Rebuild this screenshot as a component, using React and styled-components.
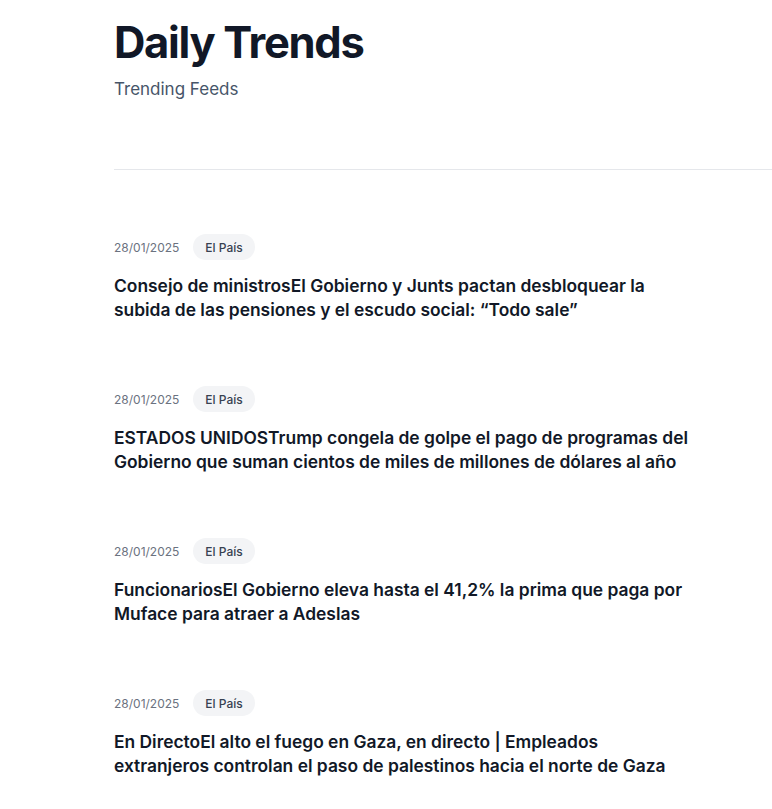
import React from "react";
import styled, { createGlobalStyle } from "styled-components";

const Global = createGlobalStyle`
  html, body { margin: 0; padding: 0; background: #fff; }
  body { font-family: Inter, "Noto Sans", sans-serif; color: #111827; -webkit-font-smoothing: antialiased; }
  * { box-sizing: border-box; }
`;

const Page = styled.main`
  padding: 16px 0 0 114px;
`;

const Header = styled.header`
  display: flex;
  flex-direction: column;
  gap: 9px;
  padding-bottom: 68px;
  border-bottom: 1px solid #e5e7eb;
`;

const Title = styled.h1`
  margin: 0;
  font-size: 43.5px;
  line-height: 52px;
  font-weight: 700;
  letter-spacing: -0.03em;
  color: #111827;
`;

const Subtitle = styled.p`
  margin: 0;
  font-size: 17px;
  line-height: 24px;
  color: #475569;
`;

const List = styled.section`
  display: flex;
  flex-direction: column;
  gap: 64px;
  padding-top: 64px;
`;

const Item = styled.article`
  display: flex;
  flex-direction: column;
  gap: 14px;
  max-width: 580px;
`;

const Meta = styled.div`
  display: flex;
  align-items: center;
  gap: 14px;
`;

const DateText = styled.time`
  font-size: 12px;
  color: #6b7280;
`;

const Badge = styled.span`
  display: inline-flex;
  align-items: center;
  height: 26px;
  padding: 0 12px;
  border-radius: 9999px;
  background: #f3f4f6;
  font-size: 12px;
  font-weight: 500;
  color: #374151;
`;

const Headline = styled.h2`
  margin: 0;
  font-size: 17.4px;
  line-height: 24px;
  font-weight: 600;
  color: #111827;
`;

const items = [
  "Consejo de ministrosEl Gobierno y Junts pactan desbloquear la subida de las pensiones y el escudo social: “Todo sale”",
  "ESTADOS UNIDOSTrump congela de golpe el pago de programas del Gobierno que suman cientos de miles de millones de dólares al año",
  "FuncionariosEl Gobierno eleva hasta el 41,2% la prima que paga por Muface para atraer a Adeslas",
  "En DirectoEl alto el fuego en Gaza, en directo | Empleados extranjeros controlan el paso de palestinos hacia el norte de Gaza",
];

export default function App() {
  return (
    <>
      <Global />
      <Page>
        <Header>
          <Title>Daily Trends</Title>
          <Subtitle>Trending Feeds</Subtitle>
        </Header>
        <List>
          {items.map((t, i) => (
            <Item key={i}>
              <Meta>
                <DateText>28/01/2025</DateText>
                <Badge>El País</Badge>
              </Meta>
              <Headline>{t}</Headline>
            </Item>
          ))}
        </List>
      </Page>
    </>
  );
}
